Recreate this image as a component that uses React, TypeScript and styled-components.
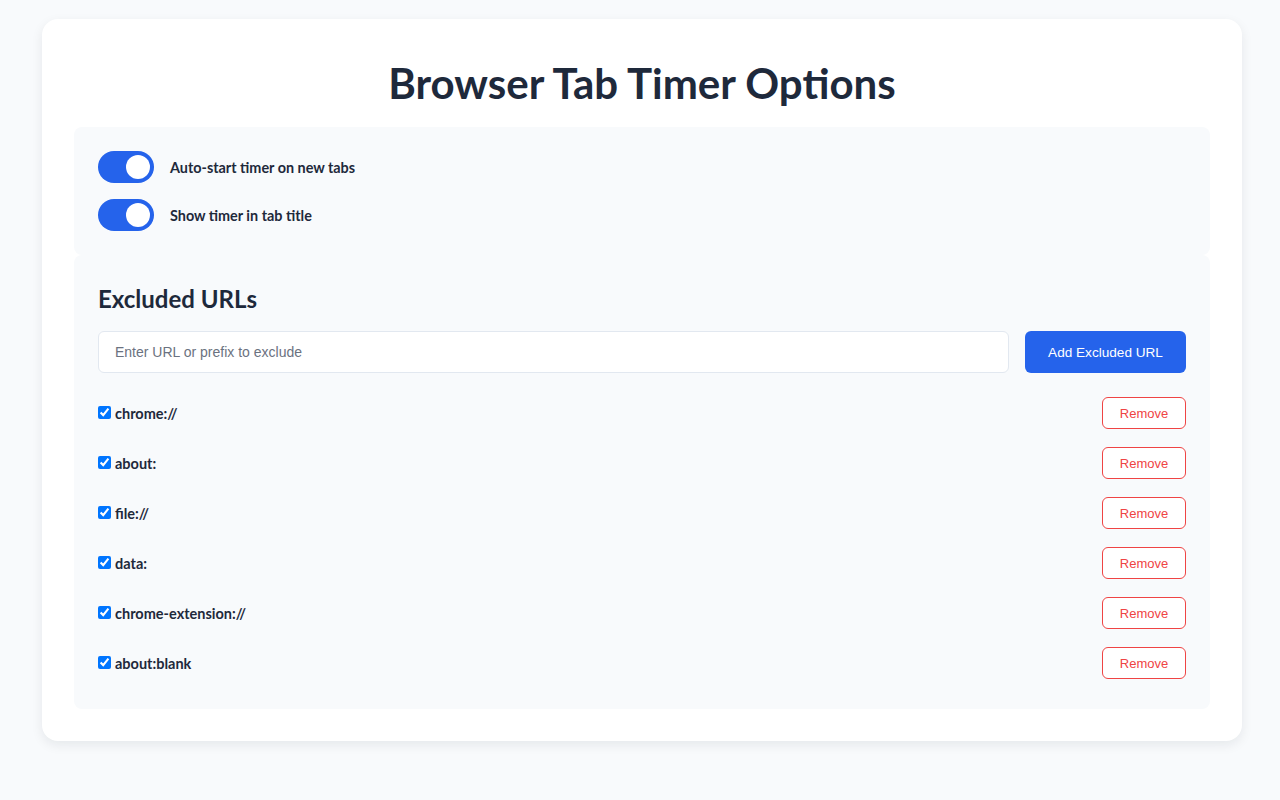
import React, { useState } from 'react';
import styled, { createGlobalStyle } from 'styled-components';

const GlobalStyle = createGlobalStyle`
  body {
    margin: 0;
    background-color: #f8fafc;
    font-family: Lato, "Noto Sans", sans-serif;
    color: #1e293b;
  }
`;

const Page = styled.div`
  padding: 19px 38px 40px 42px;
`;

const Card = styled.div`
  background: #ffffff;
  border-radius: 16px;
  box-shadow: 0 4px 12px rgba(15, 23, 42, 0.08);
  padding: 32px;
  max-width: 1136px;
`;

const Title = styled.h1`
  margin: 8px 0 20px;
  text-align: center;
  font-size: 42px;
  font-weight: 700;
  color: #1e293b;
  line-height: 48px;
`;

const Section = styled.div<{ $bottom?: number }>`
  background: #f8fafc;
  border-radius: 8px;
  padding: 24px 24px ${(p) => p.$bottom ?? 24}px;
`;

const ToggleRow = styled.label`
  display: flex;
  align-items: center;
  gap: 16px;
  height: 32px;
  font-size: 14.4px;
  font-weight: 700;
  cursor: pointer;
  & + & {
    margin-top: 16px;
  }
`;

const Switch = styled.span<{ $on: boolean }>`
  position: relative;
  width: 56px;
  height: 32px;
  border-radius: 16px;
  background: ${(p) => (p.$on ? '#2563eb' : '#cbd5e1')};
  flex-shrink: 0;
  &::after {
    content: '';
    position: absolute;
    top: 4px;
    left: ${(p) => (p.$on ? '28px' : '4px')};
    width: 24px;
    height: 24px;
    border-radius: 50%;
    background: #ffffff;
  }
`;

const Heading = styled.h2`
  margin: 4px 0 16px;
  font-size: 24px;
  font-weight: 700;
  line-height: 32px;
  color: #1e293b;
`;

const AddRow = styled.div`
  display: flex;
  gap: 16px;
  margin-bottom: 24px;
`;

const UrlInput = styled.input`
  flex: 1;
  height: 42px;
  box-sizing: border-box;
  border: 1px solid #e2e8f0;
  border-radius: 6px;
  padding: 0 16px;
  font-family: "Liberation Sans", Arial, sans-serif;
  font-size: 14px;
  background: #ffffff;
  &::placeholder {
    color: #6b7280;
  }
`;

const AddButton = styled.button`
  width: 161px;
  height: 42px;
  border: none;
  border-radius: 6px;
  background: #2563eb;
  color: #ffffff;
  font-family: "Liberation Sans", Arial, sans-serif;
  font-size: 13.6px;
`;

const UrlRow = styled.div`
  display: flex;
  align-items: center;
  justify-content: space-between;
  height: 32px;
  & + & {
    margin-top: 18px;
  }
`;

const UrlLabel = styled.label`
  display: flex;
  align-items: center;
  font-size: 14.5px;
  font-weight: 700;
  input {
    margin: 0 4px 2px 0;
    width: 13px;
    height: 13px;
    accent-color: #0075ff;
  }
`;

const RemoveButton = styled.button`
  width: 84px;
  height: 32px;
  border: 1px solid #ef4444;
  border-radius: 6px;
  background: #ffffff;
  color: #ef4444;
  font-family: "Liberation Sans", Arial, sans-serif;
  font-size: 13px;
`;

const urls = ['chrome://', 'about:', 'file://', 'data:', 'chrome-extension://', 'about:blank'];

export default function App() {
  const [autoStart, setAutoStart] = useState(true);
  const [showTitle, setShowTitle] = useState(true);

  return (
    <>
      <GlobalStyle />
      <Page>
        <Card>
          <Title>Browser Tab Timer Options</Title>
          <Section>
            <ToggleRow onClick={() => setAutoStart(!autoStart)}>
              <Switch $on={autoStart} />
              Auto-start timer on new tabs
            </ToggleRow>
            <ToggleRow onClick={() => setShowTitle(!showTitle)}>
              <Switch $on={showTitle} />
              Show timer in tab title
            </ToggleRow>
          </Section>
          <Section $bottom={30}>
            <Heading>Excluded URLs</Heading>
            <AddRow>
              <UrlInput placeholder="Enter URL or prefix to exclude" />
              <AddButton>Add Excluded URL</AddButton>
            </AddRow>
            {urls.map((u) => (
              <UrlRow key={u}>
                <UrlLabel>
                  <input type="checkbox" defaultChecked />
                  {u}
                </UrlLabel>
                <RemoveButton>Remove</RemoveButton>
              </UrlRow>
            ))}
          </Section>
        </Card>
      </Page>
    </>
  );
}
